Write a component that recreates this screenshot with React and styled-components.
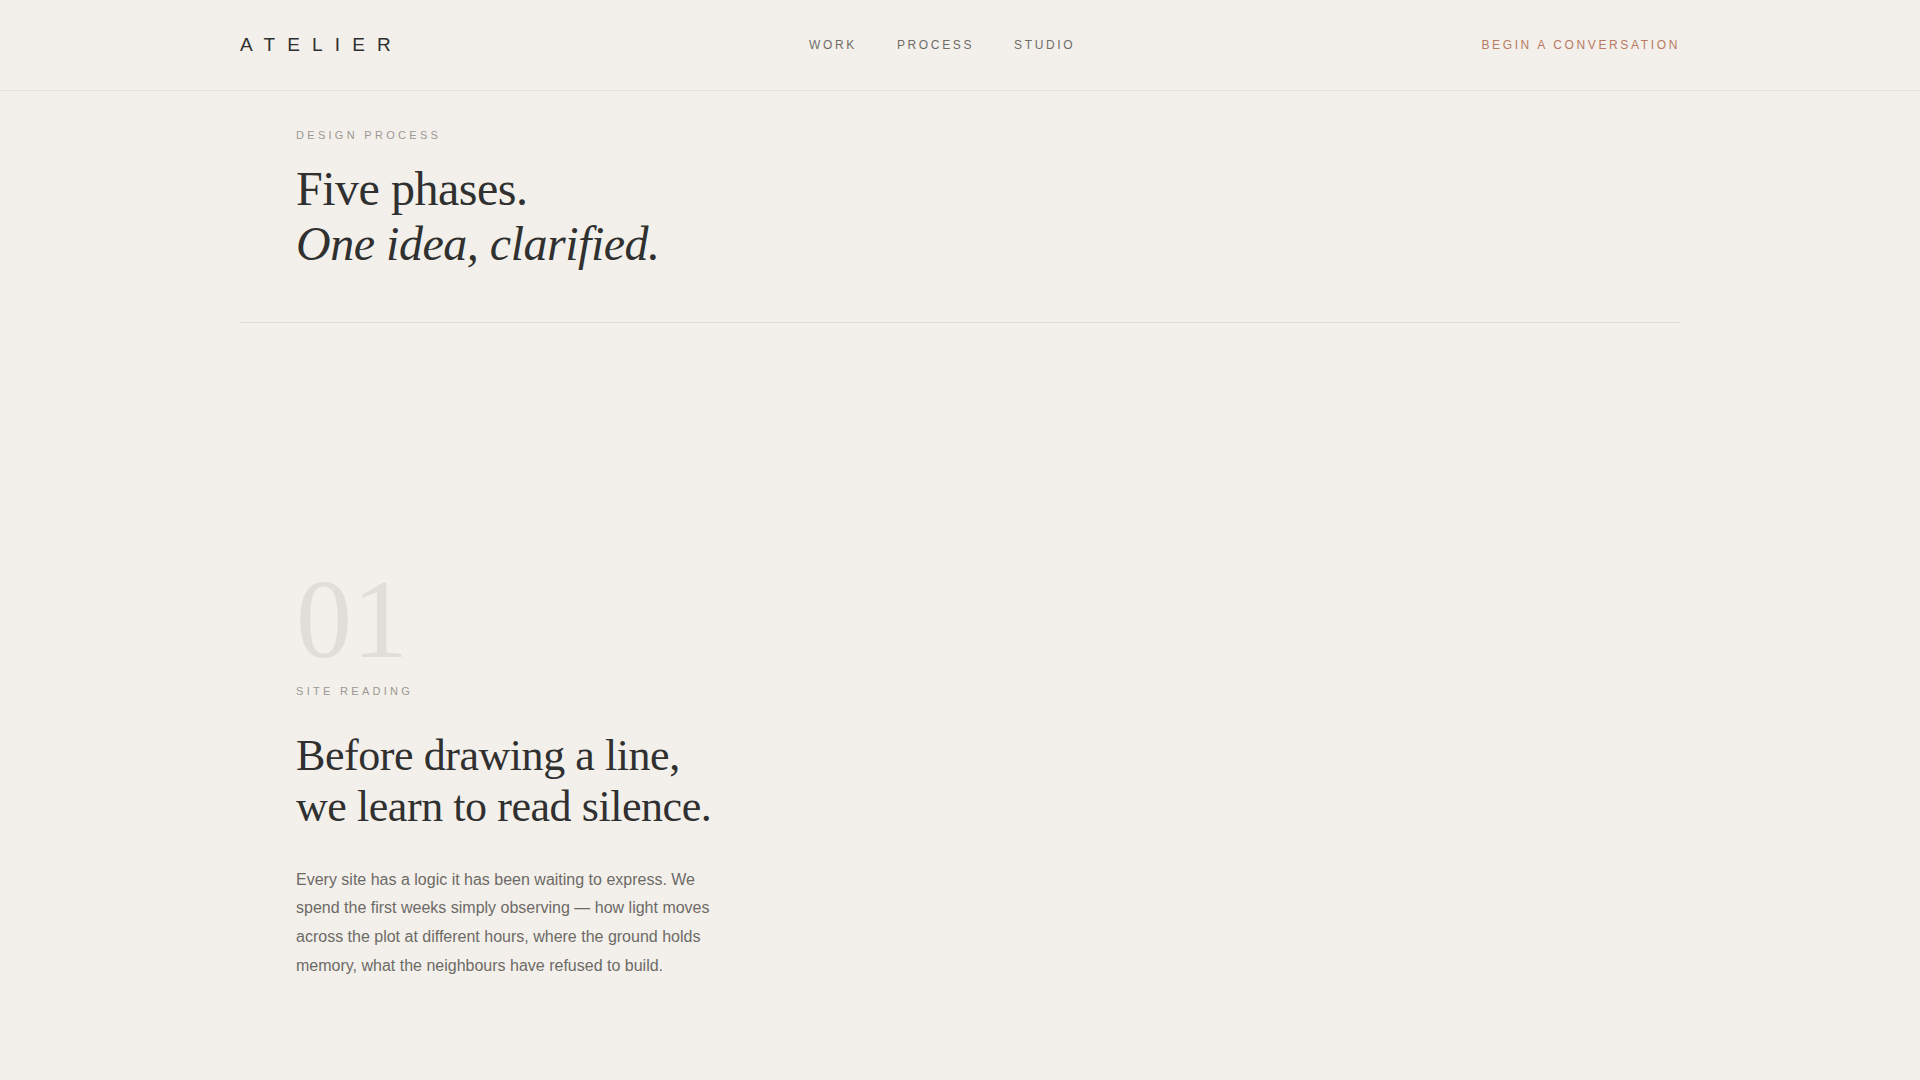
import React from 'react';
import styled, { createGlobalStyle } from 'styled-components';

const GlobalStyle = createGlobalStyle`
  body {
    margin: 0;
    background: #f3f0eb;
    font-family: "Liberation Sans", Arial, sans-serif;
    -webkit-font-smoothing: antialiased;
  }
`;

const navItems = ['Work', 'Process', 'Studio'];

const phases = [
  {
    num: '01',
    name: 'Site reading',
    title: ['Before drawing a line,', 'we learn to read silence.'],
    text:
      'Every site has a logic it has been waiting to express. We spend the first weeks simply observing — how light moves across the plot at different hours, where the ground holds memory, what the neighbours have refused to build.',
  },
];

const App = () => {
  return (
    <>
      <GlobalStyle />
      <Header>
        <Shell>
          <Logo>Atelier</Logo>
          <Nav>
            {navItems.map((item) => (
              <NavLink key={item} href="#">
                {item}
              </NavLink>
            ))}
          </Nav>
          <Cta href="#">Begin a conversation</Cta>
        </Shell>
      </Header>

      <Main>
        <Intro>
          <Eyebrow>Design process</Eyebrow>
          <Title>
            Five phases.
            <em>One idea, clarified.</em>
          </Title>
        </Intro>

        {phases.map((phase) => (
          <Phase key={phase.num}>
            <PhaseNumber>{phase.num}</PhaseNumber>
            <PhaseLabel>{phase.name}</PhaseLabel>
            <PhaseTitle>
              {phase.title.map((line) => (
                <span key={line}>{line}</span>
              ))}
            </PhaseTitle>
            <PhaseText>{phase.text}</PhaseText>
          </Phase>
        ))}
      </Main>
    </>
  );
};

export default App;

// Styled Components

const Header = styled.header`
  height: 90px;
  border-bottom: 1px solid #e4e0da;
`;

const Shell = styled.div`
  max-width: 1440px;
  height: 100%;
  margin: 0 auto;
  display: flex;
  align-items: center;
  justify-content: space-between;
`;

const Logo = styled.div`
  font-size: 19px;
  letter-spacing: 0.64em;
  text-transform: uppercase;
  color: #2f2f2f;
`;

const Nav = styled.nav`
  display: flex;
  gap: 40px;
`;

const NavLink = styled.a`
  font-size: 12px;
  letter-spacing: 0.22em;
  text-transform: uppercase;
  text-decoration: none;
  color: #6f6c68;
`;

const Cta = styled.a`
  font-size: 12px;
  letter-spacing: 0.22em;
  text-transform: uppercase;
  text-decoration: none;
  color: #b87a62;
`;

const Main = styled.main`
  max-width: 1440px;
  margin: 0 auto;
`;

const Intro = styled.section`
  padding: 38px 0 51px 56px;
  border-bottom: 1px solid #dfdbd5;
`;

const Eyebrow = styled.div`
  font-size: 11px;
  letter-spacing: 0.3em;
  text-transform: uppercase;
  color: #9b9792;
  margin-bottom: 20px;
`;

const Title = styled.h1`
  margin: 0;
  font-family: "Liberation Serif", "Times New Roman", serif;
  font-weight: 400;
  font-size: 48px;
  line-height: 1.15;
  letter-spacing: -0.01em;
  color: #303030;

  em {
    display: block;
    font-style: italic;
  }
`;

const Phase = styled.section`
  padding: 240px 0 80px 56px;
`;

const PhaseNumber = styled.div`
  font-family: "Liberation Serif", "Times New Roman", serif;
  font-size: 112px;
  line-height: 1;
  color: #e1ded9;
  margin-bottom: 10px;
`;

const PhaseLabel = styled(Eyebrow)`
  margin-bottom: 34px;
`;

const PhaseTitle = styled.h2`
  margin: 0 0 33px;
  font-family: "Liberation Serif", "Times New Roman", serif;
  font-weight: 400;
  font-size: 44px;
  line-height: 1.15;
  letter-spacing: -0.01em;
  color: #303030;

  span {
    display: block;
  }
`;

const PhaseText = styled.p`
  margin: 0;
  max-width: 420px;
  font-size: 16px;
  line-height: 1.8;
  color: #6d6a66;
`;
